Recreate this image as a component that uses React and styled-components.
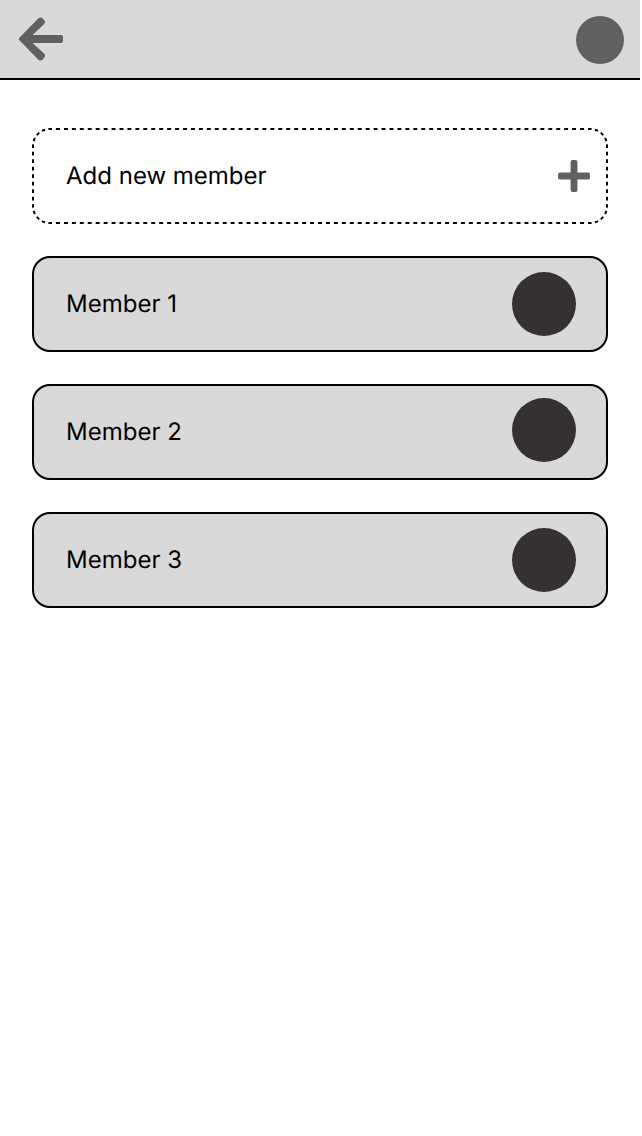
import React from "react";
import styled, { createGlobalStyle } from "styled-components";

const GlobalStyle = createGlobalStyle`
  * { box-sizing: border-box; }
  body {
    margin: 0;
    background: #fff;
    color: #000;
    font-family: Inter, sans-serif;
    text-rendering: geometricPrecision;
  }
`;

const Screen = styled.div`
  width: 640px;
  min-height: 1136px;
`;

const Header = styled.header`
  display: flex;
  align-items: flex-start;
  justify-content: space-between;
  height: 80px;
  padding: 16px 16px 0 19px;
  background: #d9d9d9;
  border-bottom: 2px solid #000;
`;

const Circle = styled.div`
  flex: none;
  width: ${(p) => p.$size}px;
  height: ${(p) => p.$size}px;
  border-radius: 50%;
  background: ${(p) => p.$color};
`;

const BackIcon = styled.svg`
  display: block;
  width: 46px;
  height: 46px;
`;

const List = styled.main`
  display: flex;
  flex-direction: column;
  gap: 32px;
  padding: 48px 32px;
`;

const Row = styled.div`
  display: flex;
  justify-content: space-between;
  height: 96px;
  padding: 0 30px 0 32px;
  border: 2px solid #000;
  border-radius: 18px;
  background: #d9d9d9;
`;

const AddRow = styled.div`
  display: grid;
  height: 96px;

  > * { grid-area: 1 / 1; }
`;

const AddContent = styled.div`
  display: flex;
  justify-content: space-between;
  padding: 2px 18px 2px 34px;
`;

const DashedOutline = styled.svg`
  display: block;
  width: 576px;
  height: 96px;
  fill: none;
  stroke: #000;
  stroke-width: 2px;
  stroke-dasharray: 0.5 0.5;
  stroke-dashoffset: 0.25;
`;

const Label = styled.span`
  align-self: center;
  font-size: 24px;
  line-height: 30px;
`;

const AvatarSlot = styled.div`
  padding-top: ${(p) => p.$top}px;
`;

const PlusIcon = styled.svg`
  align-self: center;
  width: 32px;
  height: 32px;
`;

const members = [
  { name: "Member 1", top: 14 },
  { name: "Member 2", top: 12 },
  { name: "Member 3", top: 14 },
];

export default function App() {
  return (
    <Screen>
      <GlobalStyle />
      <Header>
        <BackIcon viewBox="0 0 46 46" fill="#606060">
          <path d="M.6 21.5 19.2 2.4Q21.5.5 23.8 2.6L25 3.9Q27 6 25 8.2L13.6 19H42Q44 19 44 21V25Q44 27 42 27H13.6L25 37.6Q27 39.8 25 42L23.8 43.4Q21.5 45.5 19.2 43.6L.6 24.5Q-.8 23 .6 21.5Z" />
        </BackIcon>
        <Circle $size={48} $color="#606060" />
      </Header>
      <List>
        <AddRow>
          {/* each edge and corner holds a whole number of dashes */}
          <DashedOutline viewBox="0 0 576 96">
            <path pathLength="68" d="M18 1H558" />
            <path pathLength="4" d="M558 1A17 17 0 0 1 575 18" />
            <path pathLength="8" d="M575 18V78" />
            <path pathLength="4" d="M575 78A17 17 0 0 1 558 95" />
            <path pathLength="68" d="M558 95H18" />
            <path pathLength="4" d="M18 95A17 17 0 0 1 1 78" />
            <path pathLength="8" d="M1 78V18" />
            <path pathLength="4" d="M1 18A17 17 0 0 1 18 1" />
          </DashedOutline>
          <AddContent>
            <Label>Add new member</Label>
            <PlusIcon viewBox="0 0 32 32" fill="#606060">
              <rect x="12.6" width="6.8" height="32" rx="2" />
              <rect y="12.6" width="32" height="6.8" rx="2" />
            </PlusIcon>
          </AddContent>
        </AddRow>
        {members.map((m) => (
          <Row key={m.name}>
            <Label>{m.name}</Label>
            <AvatarSlot $top={m.top}>
              <Circle $size={64} $color="#353130" />
            </AvatarSlot>
          </Row>
        ))}
      </List>
    </Screen>
  );
}
